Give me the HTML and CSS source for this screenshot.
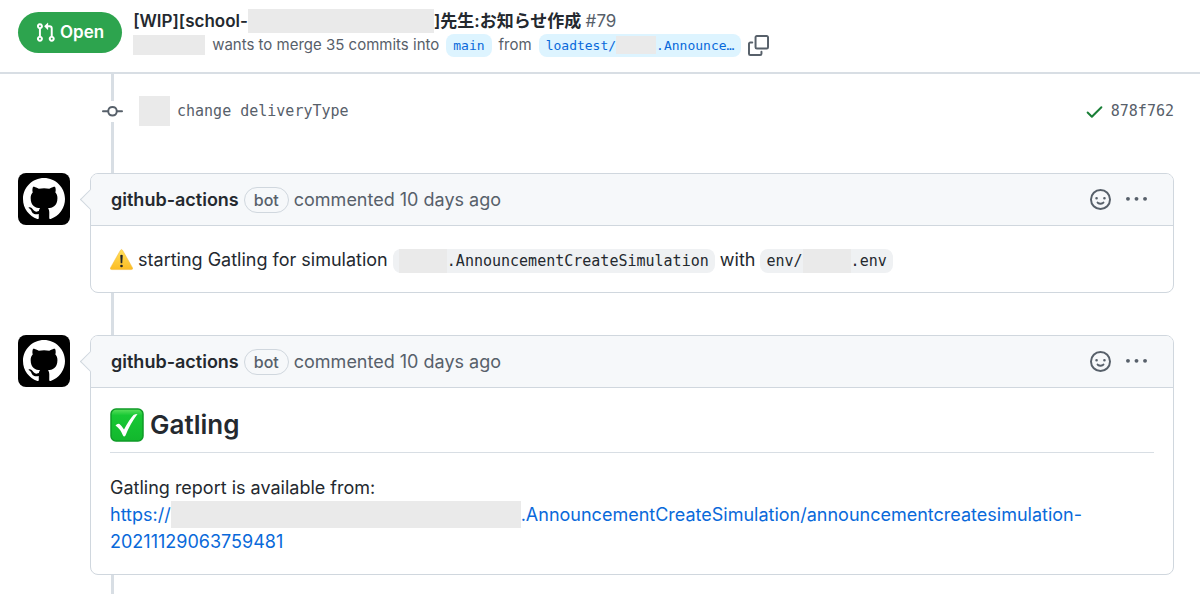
FILE: index.html
```html
<!DOCTYPE html>
<html lang="ja">
<head>
    <meta charset="UTF-8">
    <meta name="viewport" content="width=device-width, initial-scale=1.0">
    <title>先生:お知らせ作成 #79</title>
    <link rel="stylesheet" href="styles.css">
</head>
<body>
    <!-- アイコン定義 -->
    <svg class="sprite" aria-hidden="true">
        <symbol id="icon-smiley" viewBox="0 0 16 16">
            <path fill-rule="evenodd" d="M1.5 8a6.5 6.5 0 1113 0 6.5 6.5 0 01-13 0zM8 0a8 8 0 100 16A8 8 0 008 0zM5 8a1 1 0 100-2 1 1 0 000 2zm7-1a1 1 0 11-2 0 1 1 0 012 0zM5.32 9.636a.75.75 0 011.038.175l.007.009c.103.118.22.222.35.31.264.178.683.37 1.285.37.602 0 1.02-.192 1.285-.371.13-.088.247-.192.35-.31l.007-.008a.75.75 0 111.222.87l-.614-.431c.614.43.614.431.613.431v.001l-.001.002-.002.003-.005.007-.014.019a1.984 1.984 0 01-.184.213c-.16.166-.338.316-.53.445-.63.418-1.37.638-2.127.629-.946 0-1.652-.308-2.126-.63a3.32 3.32 0 01-.715-.657l-.014-.02-.005-.006-.002-.003v-.002h-.001l.613-.432-.614.43a.75.75 0 01.183-1.044h.001z"/>
        </symbol>
        <symbol id="icon-kebab" viewBox="0 0 16 16">
            <path d="M8 9a1.5 1.5 0 100-3 1.5 1.5 0 000 3zM1.5 9a1.5 1.5 0 100-3 1.5 1.5 0 000 3zm13 0a1.5 1.5 0 100-3 1.5 1.5 0 000 3z"/>
        </symbol>
        <symbol id="icon-github" viewBox="0 0 16 16">
            <path fill-rule="evenodd" d="M8 0C3.58 0 0 3.58 0 8c0 3.54 2.29 6.53 5.47 7.59.4.07.55-.17.55-.38 0-.19-.01-.82-.01-1.49-2.01.37-2.53-.49-2.69-.94-.09-.23-.48-.94-.82-1.13-.28-.15-.68-.52-.01-.53.63-.01 1.08.58 1.23.82.72 1.21 1.87.87 2.33.66.07-.52.28-.87.51-1.07-1.78-.2-3.64-.89-3.64-3.95 0-.87.31-1.59.82-2.15-.08-.2-.36-1.02.08-2.12 0 0 .67-.21 2.2.82.64-.18 1.32-.27 2-.27s1.36.09 2 .27c1.53-1.04 2.2-.82 2.2-.82.44 1.1.16 1.92.08 2.12.51.56.82 1.27.82 2.15 0 3.07-1.87 3.75-3.65 3.95.29.25.54.73.54 1.48 0 1.07-.01 1.93-.01 2.2 0 .21.15.46.55.38A8.013 8.013 0 0016 8c0-4.42-3.58-8-8-8z"/>
        </symbol>
    </svg>

    <!-- 固定ヘッダー -->
    <header class="pr-header">
        <span class="state">
            <svg class="icon" viewBox="0 0 16 16" aria-hidden="true"><path fill-rule="evenodd" d="M7.177 3.073L9.573.677A.25.25 0 0110 .854v4.792a.25.25 0 01-.427.177L7.177 3.427a.25.25 0 010-.354zM3.75 2.5a.75.75 0 100 1.5.75.75 0 000-1.5zm-2.25.75a2.25 2.25 0 113 2.122v5.256a2.251 2.251 0 11-1.5 0V5.372A2.25 2.25 0 011.5 3.25zM11 2.5h-1V4h1a1 1 0 011 1v5.628a2.251 2.251 0 101.5 0V5A2.5 2.5 0 0011 2.5zm1 10.25a.75.75 0 111.5 0 .75.75 0 01-1.5 0zM3.75 12a.75.75 0 100 1.5.75.75 0 000-1.5z"/></svg>
            Open
        </span>
        <div class="pr-info">
            <h1 class="pr-title">[WIP][school-<span class="mask mask-title"></span>]先生:お知らせ作成 <span class="pr-number">#79</span></h1>
            <div class="pr-meta">
                <span class="mask mask-user"></span>
                <span>wants to merge 35 commits into</span>
                <a class="branch" href="#">main</a>
                <span>from</span>
                <a class="branch" href="#">loadtest/<span class="mask mask-branch"></span>.Announce…</a>
                <button type="button" class="icon-button" aria-label="Copy">
                    <svg class="icon" viewBox="0 0 16 16"><path fill-rule="evenodd" d="M0 6.75C0 5.784.784 5 1.75 5h1.5a.75.75 0 010 1.5h-1.5a.25.25 0 00-.25.25v7.5c0 .138.112.25.25.25h7.5a.25.25 0 00.25-.25v-1.5a.75.75 0 011.5 0v1.5A1.75 1.75 0 019.25 16h-7.5A1.75 1.75 0 010 14.25v-7.5z"/><path fill-rule="evenodd" d="M5 1.75C5 .784 5.784 0 6.75 0h7.5C15.216 0 16 .784 16 1.75v7.5A1.75 1.75 0 0114.25 11h-7.5A1.75 1.75 0 015 9.25v-7.5zm1.75-.25a.25.25 0 00-.25.25v7.5c0 .138.112.25.25.25h7.5a.25.25 0 00.25-.25v-7.5a.25.25 0 00-.25-.25h-7.5z"/></svg>
                </button>
            </div>
        </div>
    </header>

    <!-- タイムライン -->
    <main class="timeline">
        <div class="commit">
            <span class="commit-badge">
                <svg class="icon" viewBox="0 0 16 16" aria-hidden="true"><path fill-rule="evenodd" d="M10.5 7.75a2.5 2.5 0 11-5 0 2.5 2.5 0 015 0zm1.43.75a4.002 4.002 0 01-7.86 0H.75a.75.75 0 110-1.5h3.32a4.001 4.001 0 017.86 0h3.32a.75.75 0 110 1.5h-3.32z"/></svg>
            </span>
            <span class="mask mask-avatar"></span>
            <a class="commit-message" href="#">change deliveryType</a>
            <svg class="icon check" viewBox="0 0 16 16" aria-hidden="true"><path fill-rule="evenodd" d="M13.78 4.22a.75.75 0 010 1.06l-7.25 7.25a.75.75 0 01-1.06 0L2.22 9.28a.75.75 0 011.06-1.06L6 10.94l6.72-6.72a.75.75 0 011.06 0z"/></svg>
            <a class="commit-hash" href="#">878f762</a>
        </div>

        <div class="comment-row">
            <span class="avatar"><svg aria-hidden="true"><use href="#icon-github"/></svg></span>
            <article class="comment">
                <header class="comment-header">
                    <a class="author" href="#">github-actions</a>
                    <span class="label">bot</span>
                    <span class="when">commented 10 days ago</span>
                    <button type="button" class="icon-button" aria-label="Add reaction"><svg class="icon"><use href="#icon-smiley"/></svg></button>
                    <button type="button" class="icon-button" aria-label="Show options"><svg class="icon"><use href="#icon-kebab"/></svg></button>
                </header>
                <div class="comment-body">
                    <p>
                        <svg class="warning" viewBox="0 0 24 24" role="img" aria-label="warning">
                            <defs>
                                <linearGradient id="yellow" x2="0" y2="1">
                                    <stop offset="0" stop-color="#ffe05c"/>
                                    <stop offset="1" stop-color="#fcbc23"/>
                                </linearGradient>
                            </defs>
                            <path fill="url(#yellow)" stroke="#f3b52c" stroke-width=".5" d="M10.8 2.5q1.2-2 2.4 0l10.2 18q.9 2-1.2 2H1.8q-2.1 0-1.2-2z"/>
                            <path fill="#20242a" d="M10.7 7.5q1.3-1 2.6 0l-.5 8.5h-1.6z"/>
                            <circle cx="12" cy="18.8" r="1.4" fill="#20242a"/>
                        </svg>
                        starting Gatling for simulation
                        <code><span class="mask mask-package"></span>.AnnouncementCreateSimulation</code>
                        with
                        <code>env/<span class="mask mask-env"></span>.env</code>
                    </p>
                </div>
            </article>
        </div>

        <div class="comment-row">
            <span class="avatar"><svg aria-hidden="true"><use href="#icon-github"/></svg></span>
            <article class="comment">
                <header class="comment-header">
                    <a class="author" href="#">github-actions</a>
                    <span class="label">bot</span>
                    <span class="when">commented 10 days ago</span>
                    <button type="button" class="icon-button" aria-label="Add reaction"><svg class="icon"><use href="#icon-smiley"/></svg></button>
                    <button type="button" class="icon-button" aria-label="Show options"><svg class="icon"><use href="#icon-kebab"/></svg></button>
                </header>
                <div class="comment-body">
                    <h2>
                        <svg class="done" viewBox="0 0 34 34" role="img" aria-label="done">
                            <defs>
                                <linearGradient id="green" x2="0" y2="1">
                                    <stop offset="0" stop-color="#5fe05f"/>
                                    <stop offset=".2" stop-color="#17c834"/>
                                    <stop offset="1" stop-color="#12b72d"/>
                                </linearGradient>
                            </defs>
                            <rect x="1" y="1" width="32" height="32" rx="5" fill="url(#green)" stroke="#0f9a27" stroke-width="1.5"/>
                            <path fill="#fff" d="M5.5 17.5q2-2.5 4-1.5 2.5 2 4.5 5.5Q19 12 23.5 7q1.5-1 4-1Q20 16 15.5 27.5q-1.5 2-2.5 0Q10.5 21 5.5 17.5z"/>
                        </svg>
                        Gatling
                    </h2>
                    <p>
                        Gatling report is available from:<br>
                        <a href="#">https://<span class="mask mask-url"></span>.AnnouncementCreateSimulation/announcementcreatesimulation-20211129063759481</a>
                    </p>
                </div>
            </article>
        </div>
    </main>
</body>
</html>
```

FILE: styles.css
```css
/* 全体のスタイル設定 */
* {
    box-sizing: border-box;
}
body {
    margin: 0;
    background: #fff;
    color: #24292f;
    font-family: Inter, "Noto Sans CJK JP", sans-serif;
    font-size: 18px;
    line-height: 27px;
}
a {
    color: #0969da;
    text-decoration: none;
}
.sprite {
    display: none;
}
.icon {
    display: block;
    flex: none;
    width: 21px;
    height: 21px;
    fill: currentColor;
}
.icon-button {
    padding: 0;
    border: 0;
    background: none;
    color: #57606a;
}

/* マスク部分 */
.mask {
    display: inline-block;
    flex: none;
    background: #eaeaea;
    vertical-align: top;
}
.mask-title {
    width: 186px;
    height: 24px;
}
.mask-user {
    width: 72px;
    height: 20px;
}
.mask-branch {
    width: 40px;
    height: 18px;
    margin-top: 2px;
}
.mask-avatar {
    width: 31px;
    height: 30px;
}
.mask-package,
.mask-env {
    width: 48px;
    height: 24px;
}
.mask-url {
    width: 350px;
    height: 27px;
}

/* ヘッダー */
.pr-header {
    display: flex;
    gap: 11px;
    padding: 9px 18px 15px;
    border-bottom: 2px solid #d8dee4;
}
.state {
    display: flex;
    align-items: center;
    align-self: flex-start;
    gap: 4px;
    height: 41px;
    margin-top: 3px;
    padding: 0 18px 0 17px;
    border-radius: 21px;
    background: #2da44e;
    color: #fff;
    font-size: 17px;
    font-weight: 600;
}
.pr-title {
    margin: 0;
    font-size: 17px;
    font-weight: 600;
    line-height: 24px;
}
.pr-number {
    color: #57606a;
    font-weight: 400;
}
.pr-meta {
    display: flex;
    align-items: center;
    gap: 7px;
    color: #57606a;
    font-size: 15px;
    line-height: 24px;
}
.branch {
    padding: 0 7px;
    border-radius: 8px;
    background: #ddf4ff;
    font-family: "DejaVu Sans Mono", monospace;
    font-size: 13px;
    line-height: 23px;
}

/* タイムライン */
.timeline {
    position: relative;
    padding: 0 26px 42px 18px;
}
.timeline::before {
    content: "";
    position: absolute;
    top: 0;
    bottom: 0;
    left: 111px;
    z-index: -1;
    width: 3px;
    background: #d8dee4;
}

/* コミット */
.commit {
    display: flex;
    align-items: center;
    height: 74px;
    margin-bottom: 25px;
    padding-left: 84px;
    font-family: "DejaVu Sans Mono", monospace;
    font-size: 15px;
}
.commit-badge {
    background: #fff;
    color: #57606a;
}
.mask-avatar {
    margin-left: 16px;
}
.commit-message {
    flex: 1;
    margin-left: 7px;
    color: #57606a;
}
.commit-hash {
    margin-left: 6px;
    color: #57606a;
}
.check {
    color: #1a7f37;
}

/* コメント */
.comment-row {
    display: flex;
    align-items: flex-start;
    gap: 20px;
    margin-bottom: 42px;
}
.comment-row:last-child {
    margin-bottom: 0;
}
.avatar {
    display: flex;
    flex: none;
    align-items: center;
    justify-content: center;
    width: 52px;
    height: 52px;
    border-radius: 8px;
    background: #000;
}
.avatar svg {
    width: 42px;
    height: 42px;
    fill: #fff;
}
.comment {
    position: relative;
    flex: 1;
    min-width: 0;
    border: 1px solid #d0d7de;
    border-radius: 8px;
    background: #fff;
}
/* 吹き出しの三角 */
.comment::before {
    content: "";
    position: absolute;
    top: 18px;
    left: -8px;
    width: 14px;
    height: 14px;
    border: 1px solid #d0d7de;
    border-width: 0 0 1px 1px;
    background: #f6f8fa;
    transform: rotate(45deg);
}
.comment-header {
    display: flex;
    align-items: center;
    gap: 5px;
    height: 52px;
    padding: 0 26px 0 20px;
    border-bottom: 1px solid #d0d7de;
    border-radius: 7px 7px 0 0;
    background: #f6f8fa;
    color: #57606a;
}
.author {
    color: #24292f;
    font-weight: 600;
}
.label {
    padding: 0 9px;
    border: 1px solid #d0d7de;
    border-radius: 13px;
    font-size: 16px;
    font-weight: 500;
    line-height: 24px;
}
.when {
    flex: 1;
}
.comment-header .icon-button + .icon-button {
    margin-left: 10px;
}
.comment-body {
    padding: 20px 19px 19px;
}
.comment-body p {
    margin: 0;
}
code {
    display: inline-block;
    padding: 0 6px;
    border-radius: 8px;
    background: #eff1f3;
    font-family: "DejaVu Sans Mono", monospace;
    font-size: 15px;
    line-height: 24px;
}
.warning {
    width: 23px;
    height: 23px;
    vertical-align: -5px;
}
h2 {
    display: flex;
    align-items: center;
    gap: 6px;
    margin: 0 0 21px;
    padding-bottom: 10px;
    border-bottom: 1px solid #d8dee4;
    font-size: 26px;
    font-weight: 600;
    line-height: 34px;
}
.done {
    width: 34px;
    height: 34px;
}
```
